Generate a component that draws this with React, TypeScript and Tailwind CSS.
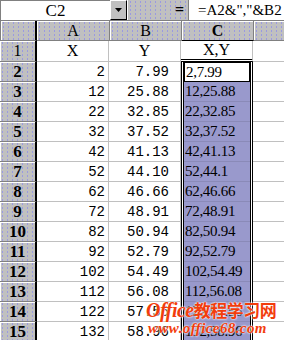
import React from "react";

const rows: [number, string, string][] = [
  [2, "7.99", "2,7.99"],
  [12, "25.88", "12,25.88"],
  [22, "32.85", "22,32.85"],
  [32, "37.52", "32,37.52"],
  [42, "41.13", "42,41.13"],
  [52, "44.10", "52,44.1"],
  [62, "46.66", "62,46.66"],
  [72, "48.91", "72,48.91"],
  [82, "50.94", "82,50.94"],
  [92, "52.79", "92,52.79"],
  [102, "54.49", "102,54.49"],
  [112, "56.08", "112,56.08"],
  [122, "57.56", "122,57.56"],
  [132, "58.96", "132,58.96"],
];

const dots =
  "bg-[#c0c0c0] bg-[radial-gradient(#9a9ae0_0.8px,transparent_1px)] bg-[length:5px_4px]";

function ColHead({ label, w, bold }: { label: string; w: string; bold?: boolean }) {
  return (
    <div
      className={`${w} ${dots} h-full flex items-center justify-center border-r border-b border-[#808080] shadow-[inset_1px_1px_0_#fff] ${
        bold ? "font-bold border-b-black" : ""
      }`}
    >
      {label}
    </div>
  );
}

function RowHead({ n, bold }: { n: number; bold?: boolean }) {
  return (
    <div
      className={`w-[37px] shrink-0 h-full ${dots} flex items-center justify-center border-b border-[#808080] border-r-2 border-r-black shadow-[inset_1px_1px_0_#fff] ${
        bold ? "font-bold text-[17px]" : ""
      }`}
    >
      {n}
    </div>
  );
}

export default function App() {
  return (
    <div className="relative w-[284px] h-[340px] overflow-hidden bg-white text-black font-['Liberation_Serif',serif] text-[16px] leading-none">
      {/* formula bar */}
      <div className="flex h-[21px] bg-[#c0c0c0] border-b border-[#808080]">
        <div className="w-[110px] bg-white border-t border-l border-[#808080] flex items-center justify-center text-[17px]">
          C2
        </div>
        <div className="w-[17px] border border-t-white border-l-white border-b-black border-r-black flex items-center justify-center">
          <svg width="7" height="4" viewBox="0 0 7 4">
            <path d="M0 0h7L3.5 4z" fill="#000" />
          </svg>
        </div>
        <div className={`w-[61px] ${dots} flex items-center justify-end pr-[4px] font-bold text-[16px] border-l border-white`}>
          =
        </div>
        <div className="flex-1 min-w-0 bg-white border-l border-[#808080] flex items-center pl-[9px] text-[15px] whitespace-nowrap">
          =A2&amp;","&amp;B2
        </div>
      </div>

      {/* column headers */}
      <div className="flex h-[20px] border-l border-[#808080]">
        <div className={`w-[36px] shrink-0 ${dots} h-full border-r-2 border-r-black border-b border-[#808080] shadow-[inset_1px_1px_0_#fff]`} />
        <ColHead label="A" w="w-[73px]" />
        <ColHead label="B" w="w-[72px]" />
        <ColHead label="C" w="w-[72px]" bold />
        <div className={`flex-1 h-full ${dots} border-b border-[#808080] shadow-[inset_1px_1px_0_#fff]`} />
      </div>

      {/* row 1 */}
      <div className="flex h-[21px]">
        <RowHead n={1} />
        <div className="w-[72px] shrink-0 flex items-center justify-center border-r border-b border-[#c0c0c0]">X</div>
        <div className="w-[72px] shrink-0 flex items-center justify-center border-r border-b border-[#c0c0c0]">Y</div>
        <div className="w-[72px] shrink-0 flex items-center justify-center border-r border-[#c0c0c0] border-b-[3px] border-b-black border-double">
          X,Y
        </div>
        <div className="flex-1 border-b border-[#c0c0c0]" />
      </div>

      {rows.map(([x, y, c], i) => (
        <div key={x} className="flex h-[20px]">
          <RowHead n={i + 2} bold />
          <div className="w-[72px] shrink-0 flex items-center justify-end pr-[3px] border-r border-b border-[#c0c0c0] font-['Liberation_Mono',monospace] text-[14px]">
            {x}
          </div>
          <div className="w-[72px] shrink-0 flex items-center justify-end pr-[11px] border-r border-b border-[#c0c0c0] font-['Liberation_Mono',monospace] text-[14px]">
            {y}
          </div>
          <div className="w-[72px] shrink-0 border-x-[3px] border-double border-black bg-clip-padding">
            <div
              className={`h-full flex items-center pl-[1px] text-[15px] tracking-[-0.3px] ${
                i === 0 ? "bg-white border border-black" : "bg-[#9999cc] border-b border-[#8a8ab8]"
              }`}
            >
              {c}
            </div>
          </div>
          <div className="flex-1 border-b border-[#c0c0c0]" />
        </div>
      ))}

      {/* watermark */}
      <div className="absolute left-[146px] top-[300px] italic font-bold text-[#f23d0c] [text-shadow:0_0_2px_#fff,0_0_2px_#fff] leading-none">
        <div className="text-[20px] font-['Liberation_Serif','Noto_Sans_CJK_SC',serif] tracking-[-0.5px]">
          Office<span className="not-italic font-['Noto_Sans_CJK_SC',sans-serif] text-[17px]">教程学习网</span>
        </div>
        <div className="mt-[1px] ml-[2px] text-[15px] font-['Liberation_Serif',serif] tracking-[0.4px]">
          www.office68.com
        </div>
      </div>
    </div>
  );
}
